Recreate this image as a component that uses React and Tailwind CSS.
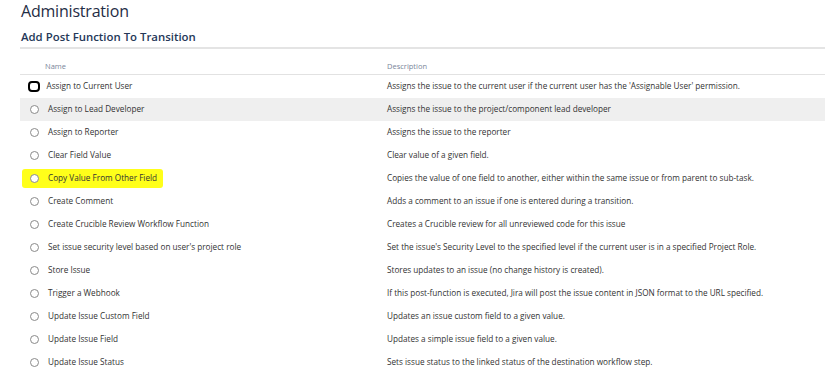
import React from 'react';

const rows = [
  ['Assign to Current User', "Assigns the issue to the current user if the current user has the 'Assignable User' permission."],
  ['Assign to Lead Developer', 'Assigns the issue to the project/component lead developer'],
  ['Assign to Reporter', 'Assigns the issue to the reporter'],
  ['Clear Field Value', 'Clear value of a given field.'],
  ['Copy Value From Other Field', 'Copies the value of one field to another, either within the same issue or from parent to sub-task.'],
  ['Create Comment', 'Adds a comment to an issue if one is entered during a transition.'],
  ['Create Crucible Review Workflow Function', 'Creates a Crucible review for all unreviewed code for this issue'],
  ["Set issue security level based on user's project role", "Set the issue's Security Level to the specified level if the current user is in a specified Project Role."],
  ['Store Issue', 'Stores updates to an issue (no change history is created).'],
  ['Trigger a Webhook', 'If this post-function is executed, Jira will post the issue content in JSON format to the URL specified.'],
  ['Update Issue Custom Field', 'Updates an issue custom field to a given value.'],
  ['Update Issue Field', 'Updates a simple issue field to a given value.'],
  ['Update Issue Status', 'Sets issue status to the linked status of the destination workflow step.'],
];

const Radio = ({ focused }) =>
  focused ? (
    <span className="w-[12px] h-[11px] rounded-[4px] border-[2.5px] border-black shrink-0" />
  ) : (
    <span className="w-[9px] h-[9px] rounded-full border border-[#8a8a8a] bg-white shrink-0 mx-[1.5px]" />
  );

export default function App() {
  return (
    <div className="w-[825px] h-[381px] overflow-hidden bg-white text-[#333] font-['Open_Sans',sans-serif]">
      <h1 className="pl-[21px] text-[16px] leading-[22px] text-[#1f2d45] font-medium tracking-[-0.2px]">
        Administration
      </h1>
      <h2 className="ml-[20px] mt-[7px] pb-[2px] border-b-2 border-[#e4e4e4] text-[11.4px] leading-[16px] text-[#253858] font-semibold pl-[1px]">
        Add Post Function To Transition
      </h2>

      <div className="ml-[20px] mt-[12px]">
        <div className="flex h-[14px] items-start border-b-[1.5px] border-[#e2e2e2] text-[7.5px] text-[#7a869a]">
          <div className="w-[367px] pl-[25px]">Name</div>
          <div>Description</div>
        </div>
        {rows.map(([name, desc], i) => (
          <div
            key={name}
            className={`flex h-[23px] items-center text-[8.2px] text-[#333] ${i === 1 ? 'bg-[#efefef]' : ''}`}
          >
            <div className="w-[367px] flex items-center pl-[8px]">
              {i === 4 ? (
                <span className="flex items-center -ml-[6px] pl-[6px] pr-[6px] h-[19px] bg-[#ffff1a] rounded-[3px]">
                  <Radio />
                  <span className="ml-[8px]">{name}</span>
                </span>
              ) : (
                <>
                  <Radio focused={i === 0} />
                  <span className={i === 0 ? 'ml-[6.5px]' : 'ml-[8px]'}>{name}</span>
                </>
              )}
            </div>
            <div>{desc}</div>
          </div>
        ))}
      </div>
    </div>
  );
}
